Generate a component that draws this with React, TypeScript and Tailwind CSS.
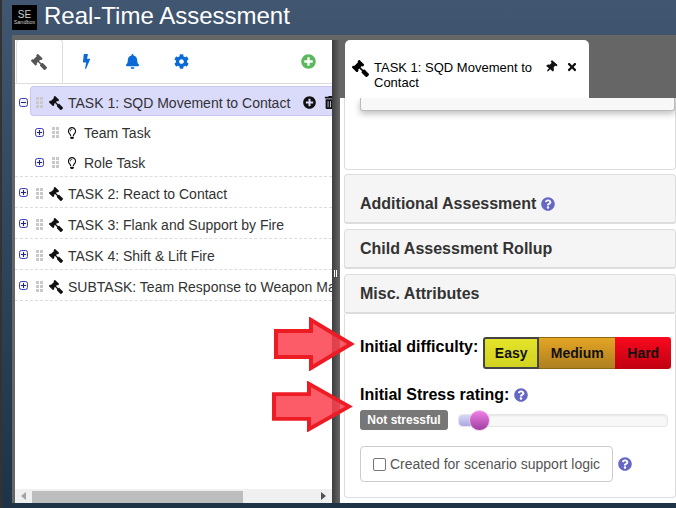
import {
  FaBell,
  FaBolt,
  FaCog,
  FaGavel,
  FaPlusCircle,
  FaQuestionCircle,
  FaRegLightbulb,
  FaThumbtack,
  FaTimes,
  FaTrashAlt,
} from "react-icons/fa";

const font = "font-['Liberation_Sans',Arial,sans-serif]";

function Expander({ open = false }: { open?: boolean }) {
  return (
    <svg width="9" height="9" viewBox="0 0 9 9" className="shrink-0">
      <rect x="0.5" y="0.5" width="8" height="8" rx="2" fill="#f2f2ff" stroke="#3c3cb4" />
      <path d="M2 4.5h5" stroke="#22227a" strokeWidth="1" />
      {!open && <path d="M4.5 2v5" stroke="#22227a" strokeWidth="1" />}
    </svg>
  );
}

function Grip() {
  return (
    <svg width="7" height="11" viewBox="0 0 7 11" className="shrink-0">
      {[0, 4].map((x) =>
        [0, 4, 8].map((y) => <rect key={`${x}-${y}`} x={x} y={y} width="3" height="3" fill="#c9c9c9" />)
      )}
    </svg>
  );
}

function TaskRow({ label }: { label: string }) {
  return (
    <div className="flex h-[31px] items-center border-b border-dashed border-[#ddd] pl-1 text-[14px] text-[#333]">
      <Expander />
      <div className="ml-2 mt-[2px]">
        <Grip />
      </div>
      <FaGavel className="ml-[6px] mt-[4px] shrink-0 -scale-x-100 text-[14px] text-[#111]" />
      <span className="ml-[5px] mt-[4px] whitespace-nowrap">{label}</span>
    </div>
  );
}

function SubRow({ label }: { label: string }) {
  return (
    <div className="flex h-[30px] items-center pl-[20px] pt-[2px] text-[14px] text-[#333]">
      <Expander />
      <div className="ml-2">
        <Grip />
      </div>
      <FaRegLightbulb className="ml-[7px] mt-[1px] shrink-0 text-[12px] text-[#111]" />
      <span className="ml-[6px] mt-[2px] whitespace-nowrap">{label}</span>
    </div>
  );
}

function AccordionHead({ label, help, box }: { label: string; help?: boolean; box: string }) {
  return (
    <div
      className={`${box} flex items-end rounded-t-[4px] rounded-b-[3px] border border-b-2 border-[#ddd] bg-[#f5f5f5] px-[15px] pb-[6px] text-[16px] font-bold text-[#333]`}
    >
      <span className="flex items-center gap-[5px] whitespace-nowrap">
        {label}
        {help && <FaQuestionCircle className="text-[14px] text-[#6666c4]" />}
      </span>
    </div>
  );
}

function Arrow({ className }: { className: string }) {
  return (
    <svg viewBox="0 0 82 54" preserveAspectRatio="none" className={`absolute ${className}`}>
      <path
        d="M3 14H38V3L78 27L38 51V40H3Z"
        fill="#fb3f4c"
        fillOpacity="0.85"
        stroke="#ed1c24"
        strokeWidth="4"
      />
    </svg>
  );
}

export default function App() {
  return (
    <div
      className={`${font} relative flex h-[508px] w-[676px] flex-col overflow-hidden border-l-2 border-[#333] bg-linear-to-b from-[#415670] to-[#1f3346]`}
    >
      <header className="flex h-[35px] shrink-0 items-center pl-[10px]">
        <div className="flex h-[25px] w-[25px] flex-col items-center justify-center bg-black text-[#ccc]">
          <span className="text-[10px] leading-[9px]">SE</span>
          <span className="text-[5.5px] leading-[6px]">Sandbox</span>
        </div>
        <h1 className="mb-[4px] ml-[7px] whitespace-nowrap text-[24px] leading-none text-white">
          Real-Time Assessment
        </h1>
      </header>

      <main className="mb-[5px] ml-[10px] flex min-h-0 flex-1 bg-[#666] pl-[3px] pt-[5px]">
        <section className="flex w-[317px] shrink-0 flex-col overflow-hidden bg-white">
          <nav className="flex h-[44px] shrink-0 items-end border-b border-[#ddd] pl-[1px]">
            <div className="flex h-[44px] w-[47px] items-center justify-center rounded-t-[4px] border border-b-0 border-[#ddd] bg-white pr-[2px]">
              <FaGavel className="-scale-x-100 text-[16px] text-[#555]" />
            </div>
            <div className="flex h-[44px] w-[46px] items-center justify-center">
              <FaBolt className="scale-x-75 text-[15px] text-[#0b6bd6]" />
            </div>
            <div className="flex h-[44px] w-[46px] items-center justify-center">
              <FaBell className="text-[15px] text-[#0b6bd6]" />
            </div>
            <div className="flex h-[44px] w-[52px] items-center justify-center">
              <FaCog className="text-[15px] text-[#0b6bd6]" />
            </div>
            <div className="ml-auto flex h-[44px] w-[48px] items-center justify-center">
              <FaPlusCircle className="text-[15px] text-[#5cb85c]" />
            </div>
          </nav>

          <div className="min-h-0 flex-1 overflow-hidden">
            <div className="h-[93px] border-b border-dashed border-[#ddd] pt-[2px]">
              <div className="flex h-[30px] items-center">
                <div className="ml-1 mr-[2px] mt-[2px] w-[9px]">
                  <Expander open />
                </div>
                <div className="flex h-[30px] w-[320px] shrink-0 items-center rounded-l-[4px] border border-r-0 border-[#c6c6f0] bg-[#dadafb] pl-[5px] text-[14px] text-[#333]">
                  <div className="mt-[2px]">
                    <Grip />
                  </div>
                  <FaGavel className="ml-[6px] mt-[4px] shrink-0 -scale-x-100 text-[14px] text-[#111]" />
                  <span className="ml-[5px] mt-[4px] whitespace-nowrap">TASK 1: SQD Movement to Contact</span>
                  <FaPlusCircle className="ml-[13px] mt-[2px] shrink-0 text-[13px] text-[#111]" />
                  <FaTrashAlt className="ml-[8px] mt-[2px] shrink-0 text-[13px] text-[#111]" />
                </div>
              </div>
              <SubRow label="Team Task" />
              <SubRow label="Role Task" />
            </div>
            <TaskRow label="TASK 2: React to Contact" />
            <TaskRow label="TASK 3: Flank and Support by Fire" />
            <TaskRow label="TASK 4: Shift & Lift Fire" />
            <TaskRow label="SUBTASK: Team Response to Weapon Ma" />
          </div>

          <div className="flex h-[14px] shrink-0 items-center bg-[#f0f0f0]">
            <span className="flex w-[17px] justify-center">
              <span className="h-0 w-0 border-y-[4px] border-r-[5px] border-y-transparent border-r-[#a3a3a3]" />
            </span>
            <div className="h-[12px] w-[211px] self-end bg-[#bdbdbd]" />
            <span className="ml-auto flex w-[17px] justify-center">
              <span className="h-0 w-0 border-y-[4px] border-l-[5px] border-y-transparent border-l-[#505050]" />
            </span>
          </div>
        </section>

        <div className="flex w-[8px] shrink-0 items-center justify-center bg-linear-to-r from-[#3d3d3d] to-[#666] pt-[3px]">
          <span className="mr-[2px] h-[7px] w-[3px] border-x border-white" />
        </div>

        <section className="flex min-w-0 flex-1 flex-col">
          <div className="h-[58px] shrink-0 pl-[5px]">
            <div className="flex h-[58px] w-[244px] items-start rounded-t-[5px] bg-white pl-[7px] pt-[20px] text-[13px] leading-[15px] text-black">
              <FaGavel className="shrink-0 -scale-x-100 text-[17px]" />
              <span className="ml-[5px] w-[170px]">TASK 1: SQD Movement to Contact</span>
              <FaThumbtack className="ml-[1px] mt-[1px] shrink-0 rotate-[40deg] text-[12px] text-[#111]" />
              <FaTimes className="ml-[9px] mt-[1px] shrink-0 text-[12px] text-[#111]" />
            </div>
          </div>

          <div className="min-h-0 flex-1 overflow-hidden bg-white pl-[4px]">
            <div className="h-[72px] rounded-b-[4px] border border-t-0 border-[#ddd] pl-[15px]">
              <div className="h-[13px] rounded-b-[3px] border-x border-b border-[#bbb] bg-[#f8f8f8] shadow-[0_3px_6px_rgba(0,0,0,0.25)]" />
            </div>
            <AccordionHead label="Additional Assessment" help box="mt-[4px] h-[50px]" />
            <AccordionHead label="Child Assessment Rollup" box="mt-[5px] h-[40px]" />
            <AccordionHead label="Misc. Attributes" box="mt-[5px] h-[40px]" />

            <div className="h-[184px] rounded-b-[4px] border border-t-0 border-[#ddd] pl-[15px] pt-[23px]">
              <div className="flex items-start">
                <span className="whitespace-nowrap text-[16px] font-bold leading-[20px] text-black">
                  Initial difficulty:
                </span>
                <div className="ml-[5px] flex h-[32px] text-[14px] font-bold text-[#111]">
                  <span className="flex w-[56px] items-center justify-center rounded-l-[3px] border-2 border-[#444] bg-linear-to-b from-[#e4e42a] to-[#d2d222]">
                    Easy
                  </span>
                  <span className="flex w-[76px] items-center justify-center border-y border-[#8a6a10] bg-linear-to-b from-[#e4a524] to-[#ae8020]">
                    Medium
                  </span>
                  <span className="flex w-[56px] items-center justify-center rounded-r-[3px] bg-linear-to-b from-[#fa0a1e] to-[#c00010]">
                    Hard
                  </span>
                </div>
              </div>

              <div className="mt-[16px] flex items-center gap-[5px] text-[16px] font-bold leading-[20px] text-black">
                Initial Stress rating:
                <FaQuestionCircle className="text-[14px] text-[#6666c4]" />
              </div>

              <div className="mt-[5px] flex items-center">
                <span className="flex h-[20px] w-[88px] items-center justify-center rounded-[3px] bg-[#777] text-[12px] font-bold text-white">
                  Not stressful
                </span>
                <div className="relative ml-[10px] h-[13px] w-[210px] rounded-[4px] border border-[#e6e6e6] bg-[#f8f8f8] shadow-[inset_0_1px_2px_rgba(0,0,0,0.08)]">
                  <div className="h-full w-[21px] rounded-l-[4px] bg-linear-to-b from-[#d8d8f6] to-[#a9a9e4]" />
                  <div className="absolute left-[10px] top-[-5px] h-[21px] w-[21px] rounded-full border border-[#e8c8e8] bg-linear-to-b from-[#f080e6] to-[#a03ea2]" />
                </div>
              </div>

              <div className="mt-[16px] flex items-center">
                <label className="flex h-[36px] w-[253px] items-center rounded-[4px] border border-[#ccc] pl-[12px] text-[14px] text-[#555]">
                  <span className="h-[13px] w-[13px] rounded-[2px] border border-[#767676] bg-white" />
                  <span className="ml-[4px] whitespace-nowrap">Created for scenario support logic</span>
                </label>
                <FaQuestionCircle className="ml-[5px] text-[14px] text-[#6666c4]" />
              </div>
            </div>
          </div>
        </section>
      </main>

      <Arrow className="left-[271px] top-[317px] h-[54px] w-[82px]" />
      <Arrow className="left-[269px] top-[381px] h-[51px] w-[82px]" />
    </div>
  );
}
